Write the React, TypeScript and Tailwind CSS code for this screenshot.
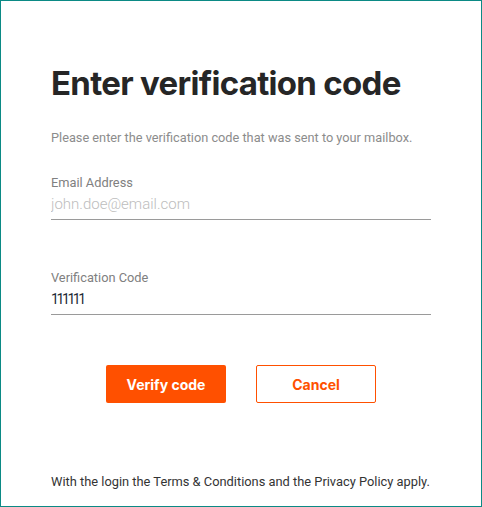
export default function App() {
  return (
    <div className="flex h-[507px] w-[482px] flex-col border border-[#0b8a85] bg-white px-[50px] font-['Roboto',sans-serif]">
      <h1 className="mt-[62px] font-['Inter',sans-serif] text-[33px] leading-[40px] font-bold tracking-[-0.7px] text-[#262626]">
        Enter verification code
      </h1>
      <p className="mt-[27px] text-[12.75px] leading-[16px] text-[#8c8c8c]">
        Please enter the verification code that was sent to your mailbox.
      </p>

      <label className="mt-[29px] block">
        <span className="block text-[12.8px] leading-[16px] text-[#808080]">Email Address</span>
        <input
          type="email"
          placeholder="john.doe@email.com"
          className="mt-[3px] block h-[26px] w-full border-b border-[#9a9a9a] bg-transparent pb-[5px] text-[15px] font-light text-[#222] outline-none placeholder:text-[#bdbdbd]"
        />
      </label>

      <label className="mt-[50px] block">
        <span className="block text-[12.8px] leading-[16px] text-[#808080]">Verification Code</span>
        <input
          type="text"
          defaultValue="111111"
          className="mt-[3px] block h-[26px] w-full border-b border-[#9a9a9a] bg-transparent pb-[5px] text-[14px] tracking-[-2.4px] text-[#1f2a36] outline-none"
        />
      </label>

      <div className="mt-[50px] flex justify-center gap-[30px] font-['Inter',sans-serif]">
        <button className="h-[38px] w-[120px] rounded-[2px] bg-[#ff5000] text-[14px] font-bold text-white">
          Verify code
        </button>
        <button className="h-[38px] w-[120px] rounded-[2px] border border-[#ff5000] bg-white text-[14px] font-bold text-[#ff5000]">
          Cancel
        </button>
      </div>

      <p className="mt-auto mb-[16px] whitespace-nowrap text-[12.85px] leading-[16px] text-[#333]">
        With the login the Terms &amp; Conditions and the Privacy Policy apply.
      </p>
    </div>
  );
}
